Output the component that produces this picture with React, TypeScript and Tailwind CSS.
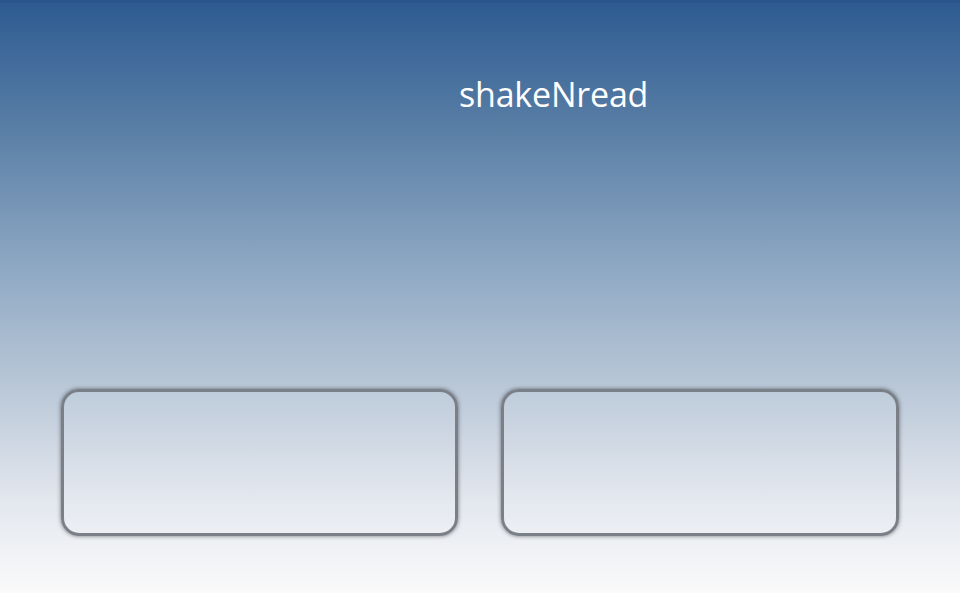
export default function App() {
  return (
    <div className="w-[960px] h-[593px] flex flex-col bg-[linear-gradient(to_bottom,#2c5a91_0%,#5a7fa6_22%,#8ea8c3_45%,#b9c7d7_65%,#e4e8ef_85%,#fafafa_100%)] font-['Open_Sans',sans-serif]">
      <div className="h-[3px] bg-[#2a558c]" />
      <div className="pl-[459px] pt-[68px] h-[386px]">
        <h1 className="text-[34px] leading-[46px] text-white tracking-[-0.2px]">shakeNread</h1>
      </div>
      <div className="flex gap-[43px] px-[61px]">
        <div className="w-[397px] h-[147px] rounded-[18px] border-[3px] border-[#7b8088] shadow-[0_0_4px_rgba(0,0,0,0.5)] bg-white/5" />
        <div className="w-[398px] h-[147px] rounded-[18px] border-[3px] border-[#7b8088] shadow-[0_0_4px_rgba(0,0,0,0.5)] bg-white/5" />
      </div>
    </div>
  );
}
